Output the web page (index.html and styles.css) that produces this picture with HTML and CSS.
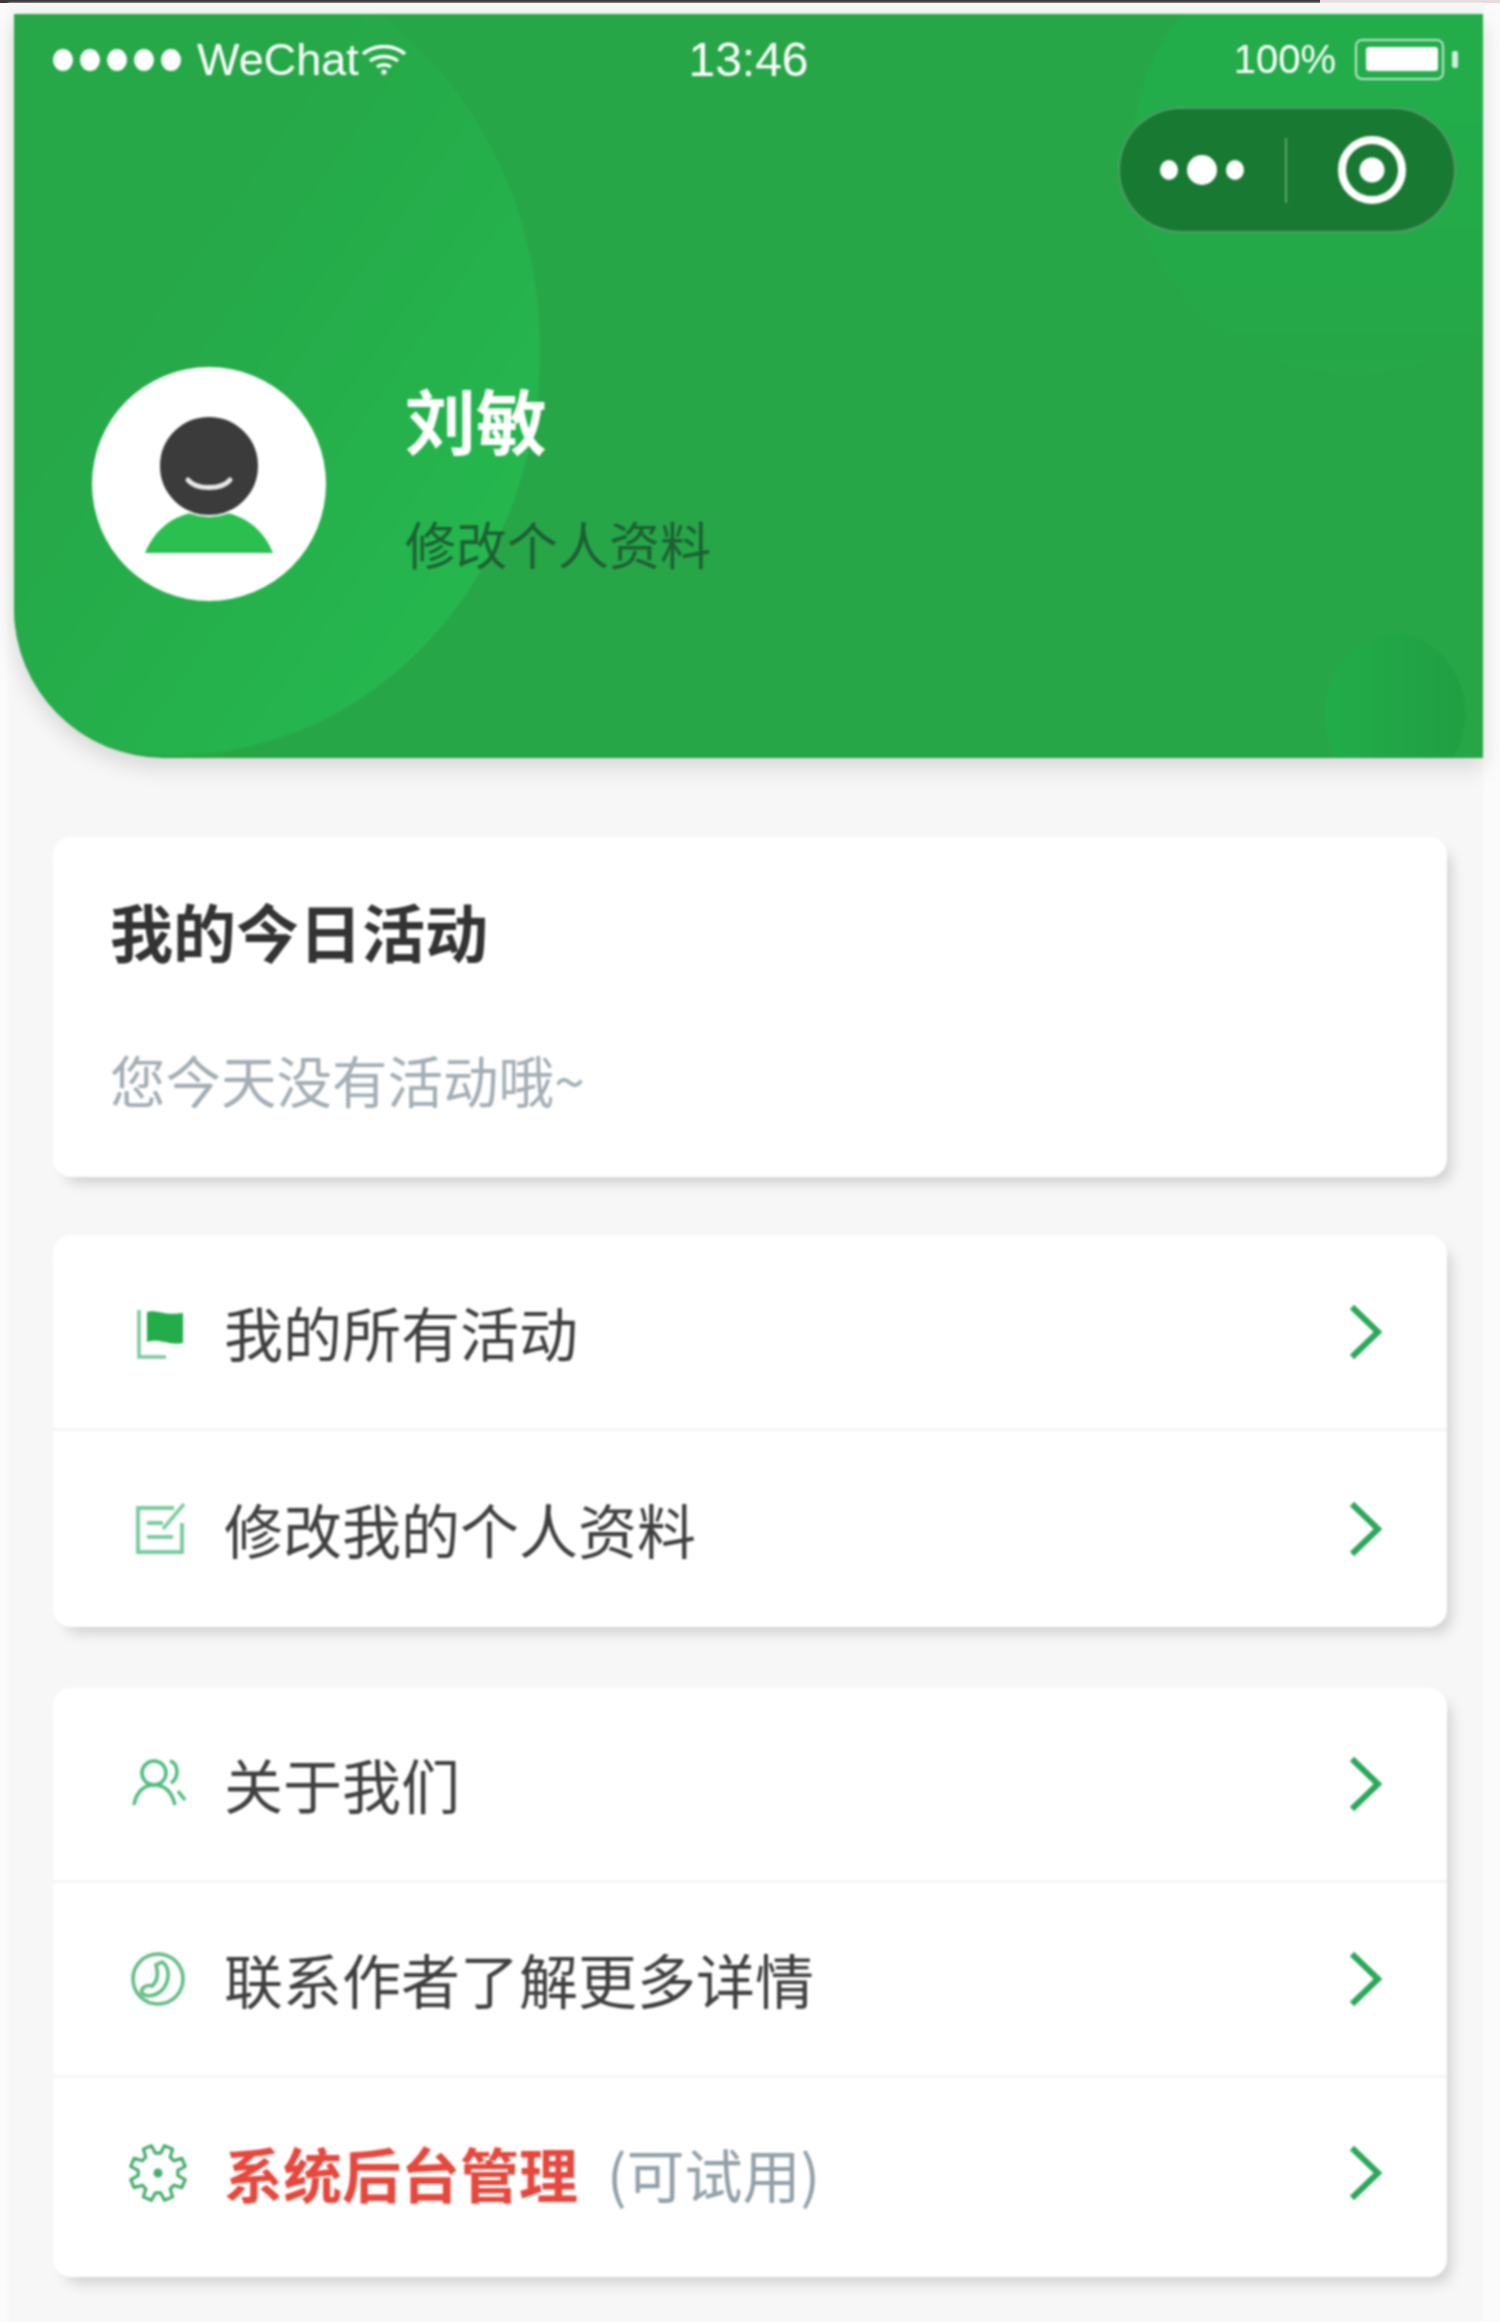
FILE: index.html
```html
<!DOCTYPE html>
<html lang="zh-CN">
<head>
    <meta charset="UTF-8">
    <meta name="viewport" content="width=device-width, initial-scale=1.0">
    <link rel="stylesheet" href="styles.css">
    <title>我的</title>
</head>
<body>
    <div class="top-strip"><div class="top-strip-dark"></div></div>
    <div class="phone">
        <header class="header">
            <div class="circle circle-left"></div>
            <div class="circle circle-right"></div>
            <div class="circle circle-bottom"></div>

            <div class="status-bar">
                <div class="status-left">
                    <div class="signal"><i></i><i></i><i></i><i></i><i></i></div>
                    <span>WeChat</span>
                    <svg class="wifi" viewBox="0 0 44 30" fill="none" stroke="#fff" stroke-width="3.4">
                        <path d="M1 9c12-10 30-10 42 0"/>
                        <path d="M8 16c8-6 20-6 28 0"/>
                        <path d="M15 22c4-3 10-3 14 0"/>
                        <circle cx="22" cy="27" r="2.6" fill="#fff" stroke="none"/>
                    </svg>
                </div>
                <div class="status-time">13:46</div>
                <div class="status-right">
                    <span>100%</span>
                    <div class="battery"><div class="battery-fill"></div></div>
                    <div class="battery-nub"></div>
                </div>
            </div>

            <div class="capsule-row">
                <div class="capsule">
                    <div class="capsule-dots"><i></i><i class="mid"></i><i></i></div>
                    <div class="capsule-line"></div>
                    <div class="capsule-target"></div>
                </div>
            </div>

            <div class="profile">
                <svg class="avatar" viewBox="0 0 234 234">
                    <circle cx="117" cy="117" r="117" fill="#fff"/>
                    <path d="M53 186c10-24 30-42 64-42s54 18 64 42z" fill="#2bbf50"/>
                    <ellipse cx="117" cy="99" rx="50" ry="50" fill="#3b3b3b" stroke="#fff" stroke-width="2"/>
                    <path d="M96 113c8 10 34 10 42 0" fill="none" stroke="#e8e8e8" stroke-width="5" stroke-linecap="round"/>
                </svg>
                <div class="profile-info">
                    <div class="profile-name">刘敏</div>
                    <div class="profile-edit">修改个人资料</div>
                </div>
            </div>
        </header>

        <main class="content">
            <section class="card today">
                <h2>我的今日活动</h2>
                <p>您今天没有活动哦~</p>
            </section>

            <section class="card menu-activity">
                <div class="row">
                    <svg class="row-icon" viewBox="0 0 60 60" fill="none">
                        <path d="M11 8v47h27" stroke="#7cc89c" stroke-width="3.5"/>
                        <path d="M19 10c10-3 16 4 36 1v30c-14 3-22-5-36-1z" fill="#22ad4a"/>
                    </svg>
                    <span class="row-text">我的所有活动</span>
                    <svg class="chevron" viewBox="0 0 36 56" fill="none"><path d="M5 3l26 25L5 53" stroke="#2ba85a" stroke-width="6"/></svg>
                </div>
                <div class="row">
                    <svg class="row-icon" viewBox="0 0 60 60" fill="none" stroke="#7acca0" stroke-width="4">
                        <path d="M46 9H10v44h44V24"/>
                        <path d="M19 24h16M19 38h26"/>
                        <path d="M35 30L56 5" stroke-width="3.5"/>
                    </svg>
                    <span class="row-text">修改我的个人资料</span>
                    <svg class="chevron" viewBox="0 0 36 56" fill="none"><path d="M5 3l26 25L5 53" stroke="#2ba85a" stroke-width="6"/></svg>
                </div>
            </section>

            <section class="card menu-last">
                <div class="row">
                    <svg class="row-icon" viewBox="0 0 60 60" fill="none" stroke="#52bd80" stroke-width="3.6">
                        <circle cx="26" cy="19" r="12"/>
                        <path d="M6 51c2-12 9-20 20-20s18 7 21 20"/>
                        <path d="M42 7c8 2 10 16 1 22"/>
                        <path d="M50 37l7 9"/>
                    </svg>
                    <span class="row-text">关于我们</span>
                    <svg class="chevron" viewBox="0 0 36 56" fill="none"><path d="M5 3l26 25L5 53" stroke="#2ba85a" stroke-width="6"/></svg>
                </div>
                <div class="row">
                    <svg class="row-icon" viewBox="0 0 60 60" fill="none" stroke="#62bd85" stroke-width="3.6">
                        <circle cx="30" cy="30" r="25"/>
                        <path d="M34 13c8 5 8 18 1 27-6 7-17 9-21 4-2-4 4-9 10-7 5-4 7-12 4-21z"/>
                    </svg>
                    <span class="row-text">联系作者了解更多详情</span>
                    <svg class="chevron" viewBox="0 0 36 56" fill="none"><path d="M5 3l26 25L5 53" stroke="#2ba85a" stroke-width="6"/></svg>
                </div>
                <div class="row">
                    <svg class="row-icon" viewBox="0 0 60 60" fill="none" stroke="#48ad6c" stroke-width="3.2" stroke-linejoin="round">
                        <polygon transform="rotate(22.5 30 30)" points="49.32,24.82 57.66,25.62 57.66,34.38 49.32,35.18 47.32,40 52.65,46.46 46.46,52.65 40,47.32 35.18,49.32 34.38,57.66 25.62,57.66 24.82,49.32 20,47.32 13.54,52.65 7.35,46.46 12.68,40 10.68,35.18 2.34,34.38 2.34,25.62 10.68,24.82 12.68,20 7.35,13.54 13.54,7.35 20,12.68 24.82,10.68 25.62,2.34 34.38,2.34 35.18,10.68 40,12.68 46.46,7.35 52.65,13.54 47.32,20"/>
                        <circle cx="30" cy="30" r="4.5" fill="#48ad6c" stroke="none"/>
                    </svg>
                    <span class="row-text admin">系统后台管理</span>
                    <span class="trial">(可试用)</span>
                    <svg class="chevron" viewBox="0 0 36 56" fill="none"><path d="M5 3l26 25L5 53" stroke="#2ba85a" stroke-width="6"/></svg>
                </div>
            </section>
        </main>
    </div>
</body>
</html>
```

FILE: styles.css
```css
* {
    box-sizing: border-box;
}

body {
    margin: 0;
    height: 2322px;
    overflow: hidden;
    background-color: #fbfbfb;
    font-family: "Noto Sans CJK SC", "Liberation Sans", sans-serif;
    color: #444;
}

.top-strip {
    height: 3px;
    background-color: #e9dcdc;
}

.top-strip-dark {
    width: 1320px;
    height: 3px;
    background-color: #3a3a3a;
}

/* the reference is an enlarged capture, so everything is a little soft */
.phone {
    margin: 0 17px 0 8px;
    padding: 11px 0 0 6px;
    height: 2319px;
    background-color: #f7f7f7;
    filter: blur(0.9px);
}

.header {
    position: relative;
    height: 744px;
    background-color: #27a648;
    border-radius: 0 0 0 150px;
    box-shadow: 0 10px 22px rgba(0, 0, 0, 0.13);
    overflow: hidden;
    color: #fff;
}

.circle {
    position: absolute;
    border-radius: 50%;
}

.circle-left {
    left: -206px;
    top: -69px;
    width: 732px;
    height: 810px;
    background: linear-gradient(125deg, #26a748 42%, #25b84f 88%);
}

.circle-right {
    left: 1118px;
    top: -80px;
    width: 440px;
    height: 440px;
    background: linear-gradient(180deg, #22ac4a 40%, #26a748 100%);
}

.circle-bottom {
    left: 1311px;
    top: 620px;
    width: 140px;
    height: 160px;
    background: linear-gradient(90deg, #22ac4a, #219f42);
}

.status-bar {
    position: relative;
    display: grid;
    grid-template-columns: 1fr auto 1fr;
    align-items: center;
    height: 50px;
    padding: 18px 25px 0 39px;
    box-sizing: content-box;
    font-family: "Liberation Sans", sans-serif;
}

.status-left {
    display: flex;
    align-items: center;
    font-size: 45px;
}

.signal {
    display: flex;
    gap: 7px;
    margin-right: 16px;
}

.signal i {
    display: block;
    width: 20px;
    height: 22px;
    border-radius: 50%;
    background-color: #fff;
}

.wifi {
    width: 44px;
    height: 30px;
    margin-left: 3px;
}

.status-time {
    position: relative;
    right: 7px;
    font-size: 48px;
}

.status-right {
    display: flex;
    align-items: center;
    justify-content: flex-end;
    font-size: 40px;
}

.battery {
    width: 89px;
    height: 41px;
    margin-left: 19px;
    padding: 6px 4px 7px 9px;
    border: 2px solid rgba(255, 255, 255, 0.7);
    border-radius: 7px;
}

.battery-fill {
    height: 100%;
    background-color: #fff;
    border-radius: 3px;
}

.battery-nub {
    width: 6px;
    height: 17px;
    margin-left: 8px;
    background-color: rgba(255, 255, 255, 0.8);
    border-radius: 2px;
}

.capsule-row {
    position: relative;
    display: flex;
    justify-content: flex-end;
    margin-top: 25px;
    padding-right: 27px;
}

.capsule {
    display: flex;
    align-items: center;
    width: 338px;
    height: 126px;
    padding-left: 40px;
    background-color: #187a32;
    border: 2px solid rgba(255, 255, 255, 0.25);
    border-radius: 63px;
}

.capsule-dots {
    display: flex;
    align-items: center;
    gap: 9px;
    width: 125px;
}

.capsule-dots i {
    display: block;
    width: 18px;
    height: 20px;
    border-radius: 50%;
    background-color: #fff;
}

.capsule-dots .mid {
    width: 30px;
    height: 30px;
}

.capsule-line {
    width: 2px;
    height: 65px;
    background-color: rgba(255, 255, 255, 0.3);
}

.capsule-target {
    width: 68px;
    height: 68px;
    margin-left: 51px;
    border: 8px solid #fff;
    border-radius: 50%;
    background: radial-gradient(circle, #fff 12px, transparent 13px);
}

.profile {
    position: relative;
    display: flex;
    margin-top: 134px;
    padding-left: 78px;
}

.avatar {
    width: 234px;
    height: 234px;
    flex-shrink: 0;
}

.profile-info {
    margin: 16px 0 0 79px;
}

.profile-name {
    font-size: 71px;
    line-height: 70px;
    font-weight: 700;
}

.profile-edit {
    margin-top: 65px;
    font-size: 51px;
    line-height: 50px;
    color: #1d5f32;
}

.content {
    display: flex;
    flex-direction: column;
    padding: 79px 36px 0 39px;
}

.card {
    background-color: #fff;
    border-radius: 18px;
    box-shadow: 8px 10px 14px -4px rgba(0, 0, 0, 0.16);
    margin-bottom: 58px;
}

.menu-last {
    margin-top: 3px;
}

.today {
    height: 340px;
    padding: 58px 0 0 57px;
}

.today h2 {
    margin: 0;
    font-size: 63px;
    line-height: 70px;
    font-weight: 700;
    color: #333;
}

.today p {
    margin: 84px 0 0;
    font-size: 55.5px;
    line-height: 60px;
    color: #a3aeb5;
}

.row {
    display: flex;
    align-items: center;
    height: 195px;
    padding: 0 64px 0 75px;
    border-bottom: 3px solid #f5f5f5;
}

.row:last-child {
    border-bottom: none;
}

.menu-activity .row {
    height: 196px;
}

.menu-last .row:last-child {
    height: 199px;
    padding-bottom: 10px;
}

.row-icon {
    width: 60px;
    height: 60px;
    flex-shrink: 0;
}

.row-text {
    margin-left: 36px;
    font-size: 59px;
    line-height: 70px;
    color: #404040;
}

.admin {
    font-weight: 700;
    color: #e5483d;
}

.trial {
    margin-left: 29px;
    font-size: 58px;
    line-height: 70px;
    color: #93a0a9;
}

.chevron {
    width: 36px;
    height: 56px;
    margin-left: auto;
}
```
